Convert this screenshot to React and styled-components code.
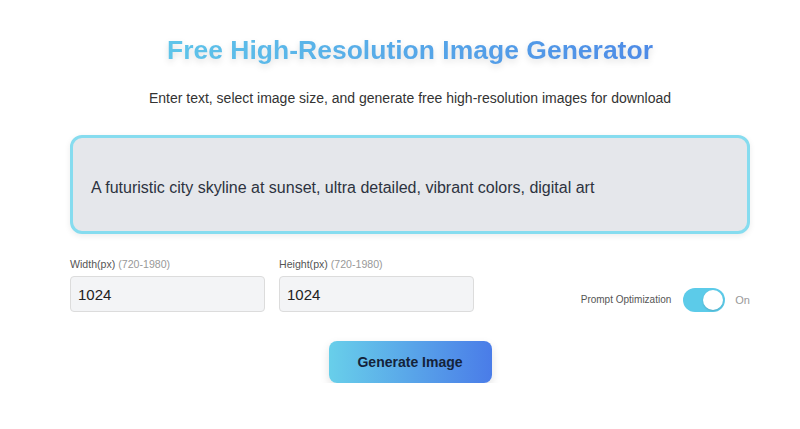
import React, { useState } from "react";
import styled, { createGlobalStyle } from "styled-components";

const Global = createGlobalStyle`
  html, body { margin: 0; padding: 0; background: #ffffff; }
  body { font-family: "Liberation Sans", Arial, sans-serif; }
  * { box-sizing: border-box; }
`;

const Shell = styled.div`
  padding-left: 20px;
`;

const Page = styled.div`
  width: 680px;
  margin: 0 auto;
  padding-top: 34px;
  display: flex;
  flex-direction: column;
  align-items: stretch;
`;

const Title = styled.h1`
  margin: 0;
  text-align: center;
  font-size: 26.5px;
  line-height: 32px;
  font-weight: 700;
  background: linear-gradient(90deg, #62d0ea 0%, #4a7fe6 100%);
  -webkit-background-clip: text;
  background-clip: text;
  color: transparent;
  filter: drop-shadow(0 3px 3px rgba(0, 0, 0, 0.12));
`;

const Subtitle = styled.p`
  margin: 23px 0 0;
  text-align: center;
  font-size: 14px;
  line-height: 18px;
  color: #333;
`;

const PromptBox = styled.textarea`
  margin-top: 28px;
  height: 99px;
  width: 100%;
  resize: none;
  border: 3px solid #86dcef;
  border-radius: 12px;
  background: #e5e7eb;
  padding: 39px 18px 0;
  font-family: "Liberation Sans", Arial, sans-serif;
  font-size: 16px;
  line-height: 22px;
  color: #2d3340;
  box-shadow: 0 2px 6px rgba(0, 0, 0, 0.08);
  outline: none;
`;

const Controls = styled.div`
  margin-top: 23px;
  display: flex;
  align-items: flex-end;
  gap: 14px;
`;

const Field = styled.div`
  display: flex;
  flex-direction: column;
  gap: 5px;
  width: 195px;
`;

const Label = styled.label`
  font-size: 10.6px;
  line-height: 14px;
  color: #555;
`;

const Hint = styled.span`
  color: #999;
`;

const NumInput = styled.input`
  height: 36px;
  width: 100%;
  border: 1px solid #dcdcdc;
  border-radius: 4px;
  background: #f3f4f6;
  padding: 0 7px;
  font-family: "Liberation Sans", Arial, sans-serif;
  font-size: 15px;
  color: #222;
  outline: none;
`;

const ToggleRow = styled.div`
  margin-left: auto;
  display: flex;
  align-items: center;
  height: 25px;
`;

const ToggleLabel = styled.span`
  font-size: 10px;
  color: #555;
  margin-right: 12px;
`;

const Switch = styled.button`
  position: relative;
  width: 42px;
  height: 24px;
  border: none;
  padding: 0;
  border-radius: 12px;
  background: ${(p) => (p.$on ? "#5ccbe9" : "#ccc")};
  cursor: pointer;
`;

const Knob = styled.span`
  position: absolute;
  top: 2px;
  left: ${(p) => (p.$on ? "20px" : "2px")};
  width: 20px;
  height: 20px;
  border-radius: 50%;
  background: #fff;
  box-shadow: 0 1px 2px rgba(0, 0, 0, 0.15);
`;

const OnText = styled.span`
  font-size: 11px;
  color: #999;
  margin-left: 10px;
`;

const ButtonRow = styled.div`
  display: flex;
  justify-content: center;
  margin-top: 29px;
`;

const GenButton = styled.button`
  width: 163px;
  height: 42px;
  border: none;
  border-radius: 8px;
  background: linear-gradient(90deg, #68cfea 0%, #4a7ce8 100%);
  color: #14233a;
  font-family: "Liberation Sans", Arial, sans-serif;
  font-size: 14px;
  font-weight: 700;
  box-shadow: 0 4px 10px rgba(0, 0, 0, 0.12);
  cursor: pointer;
`;

export default function App() {
  const [on, setOn] = useState(true);
  return (
    <>
      <Global />
      <Shell>
        <Page>
          <Title>Free High-Resolution Image Generator</Title>
          <Subtitle>
            Enter text, select image size, and generate free high-resolution images for download
          </Subtitle>
          <PromptBox defaultValue="A futuristic city skyline at sunset, ultra detailed, vibrant colors, digital art" />
          <Controls>
            <Field>
              <Label>
                Width(px) <Hint>(720-1980)</Hint>
              </Label>
              <NumInput defaultValue="1024" />
            </Field>
            <Field>
              <Label>
                Height(px) <Hint>(720-1980)</Hint>
              </Label>
              <NumInput defaultValue="1024" />
            </Field>
            <ToggleRow>
              <ToggleLabel>Prompt Optimization</ToggleLabel>
              <Switch $on={on} onClick={() => setOn(!on)}>
                <Knob $on={on} />
              </Switch>
              <OnText>On</OnText>
            </ToggleRow>
          </Controls>
          <ButtonRow>
            <GenButton>Generate Image</GenButton>
          </ButtonRow>
        </Page>
      </Shell>
    </>
  );
}
